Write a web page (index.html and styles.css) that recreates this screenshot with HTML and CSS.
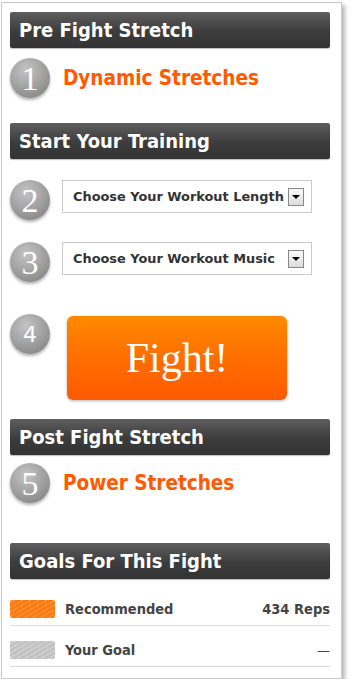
FILE: index.html
```html
<!DOCTYPE html>
<html>
<head>
<meta charset="utf-8">
<link rel="stylesheet" href="styles.css">
</head>
<body>
<div class="panel">
  <h2 class="bar">Pre Fight Stretch</h2>
  <div class="step s1">
    <span class="num">1</span>
    <a class="link">Dynamic Stretches</a>
  </div>
  <h2 class="bar h2">Start Your Training</h2>
  <div class="step s2">
    <span class="num">2</span>
    <div class="select"><span class="sel-text">Choose Your Workout Length</span><span class="arrow"></span></div>
  </div>
  <div class="step s3">
    <span class="num">3</span>
    <div class="select"><span class="sel-text">Choose Your Workout Music</span><span class="arrow"></span></div>
  </div>
  <div class="step s4">
    <span class="num num-sans">4</span>
    <button class="fight">Fight!</button>
  </div>
  <h2 class="bar h3">Post Fight Stretch</h2>
  <div class="step s5">
    <span class="num">5</span>
    <a class="link">Power Stretches</a>
  </div>
  <h2 class="bar h4">Goals For This Fight</h2>
  <div class="goal">
    <span class="swatch orange"></span>
    <span class="goal-label">Recommended</span>
    <span class="goal-value">434 Reps</span>
  </div>
  <div class="goal">
    <span class="swatch grey"></span>
    <span class="goal-label">Your Goal</span>
    <span class="goal-value dash">—</span>
  </div>
</div>
</body>
</html>
```
FILE: styles.css
```css
html, body {
  margin: 0;
  padding: 0;
  background: #fff;
}
body {
  font-family: "DejaVu Sans", Verdana, sans-serif;
}
.panel {
  margin: 2px 0 0 1px;
  width: 320px;
  padding: 9px 11px 11px 8px;
  border: 1px solid #c9c9c9;
  box-shadow: 3px 3px 4px rgba(0,0,0,0.28);
  background: #fff;
}
.bar {
  margin: 0;
  height: 36px;
  line-height: 37px;
  padding-left: 9px;
  border-radius: 2px;
  background: linear-gradient(#5e5e5e, #3c3c3c 55%, #333);
  box-shadow: 0 1px 1px rgba(0,0,0,0.25);
  color: #fff;
  font-size: 20px;
  font-weight: bold;
  font-stretch: condensed;
}
.h2 { margin-top: 25px; }
.h3 { margin-top: 19px; }
.h4 { margin-top: 40px; }
.step {
  display: flex;
  align-items: center;
}
.s1 { margin-top: 10px; }
.s2 { margin-top: 21px; align-items: flex-start; }
.s3 { margin-top: 22px; align-items: flex-start; }
.s4 { margin-top: 32px; align-items: flex-start; }
.s5 { margin-top: 8px; }
.num {
  flex: none;
  width: 40px;
  height: 40px;
  border-radius: 50%;
  background: radial-gradient(circle at 40% 30%, #c4c4c4, #a4a4a4 45%, #8a8a8a 80%);
  box-shadow: 0 2px 3px rgba(0,0,0,0.3);
  color: #fff;
  font-family: "Liberation Serif", "Times New Roman", serif;
  font-size: 34px;
  line-height: 42px;
  text-align: center;
}
.num-sans {
  font-family: "DejaVu Sans", sans-serif;
  font-size: 22px;
  line-height: 42px;
}
.link {
  margin-left: 13px;
  color: #ff5a00;
  font-size: 20.5px;
  font-weight: bold;
  font-stretch: condensed;
}
.select {
  position: relative;
  margin-left: 12px;
  width: 238px;
  height: 31px;
  padding-left: 10px;
  border: 1px solid #cccccc;
  display: flex;
  align-items: center;
}
.sel-text {
  color: #333;
  font-size: 12.9px;
  font-weight: bold;
  white-space: nowrap;
}
.arrow {
  position: absolute;
  left: 225px;
  top: 7px;
  width: 14px;
  height: 16px;
  border: 1px solid #888;
  background: linear-gradient(#fafafa, #dcdcdc);
}
.arrow::after {
  content: "";
  position: absolute;
  left: 3px;
  top: 6px;
  border-left: 4px solid transparent;
  border-right: 4px solid transparent;
  border-top: 4px solid #000;
}
.fight {
  margin: 2px 0 0 17px;
  width: 220px;
  height: 84px;
  border: none;
  border-radius: 6px;
  background: linear-gradient(#ff8a00, #ff6e00 50%, #ff5a00);
  box-shadow: 0 1px 3px rgba(0,0,0,0.3);
  color: #fff;
  font-family: "Liberation Serif", "Times New Roman", serif;
  font-size: 42px;
  padding: 0;
}
.goal {
  display: flex;
  align-items: center;
  height: 32px;
  padding-top: 8px;
  border-bottom: 1px solid #dedede;
}
.h4 + .goal { margin-top: 6px; }
.swatch {
  flex: none;
  width: 45px;
  height: 18px;
  border-radius: 2px;
}
.swatch.orange {
  background: repeating-linear-gradient(-30deg, #ff7a10 0 3px, #ff9a40 3px 4px), #ff7a00;
}
.swatch.grey {
  background: repeating-linear-gradient(-30deg, #c2c2c2 0 3px, #d6d6d6 3px 4px), #c4c4c4;
}
.goal-label {
  margin-left: 10px;
  flex: 1;
  color: #444;
  font-size: 14.5px;
  font-weight: bold;
  font-stretch: condensed;
}
.goal-value {
  color: #444;
  font-size: 14.5px;
  font-weight: bold;
  font-stretch: condensed;
}
.dash {
  font-weight: normal;
  font-stretch: normal;
  font-size: 13px;
}
```
